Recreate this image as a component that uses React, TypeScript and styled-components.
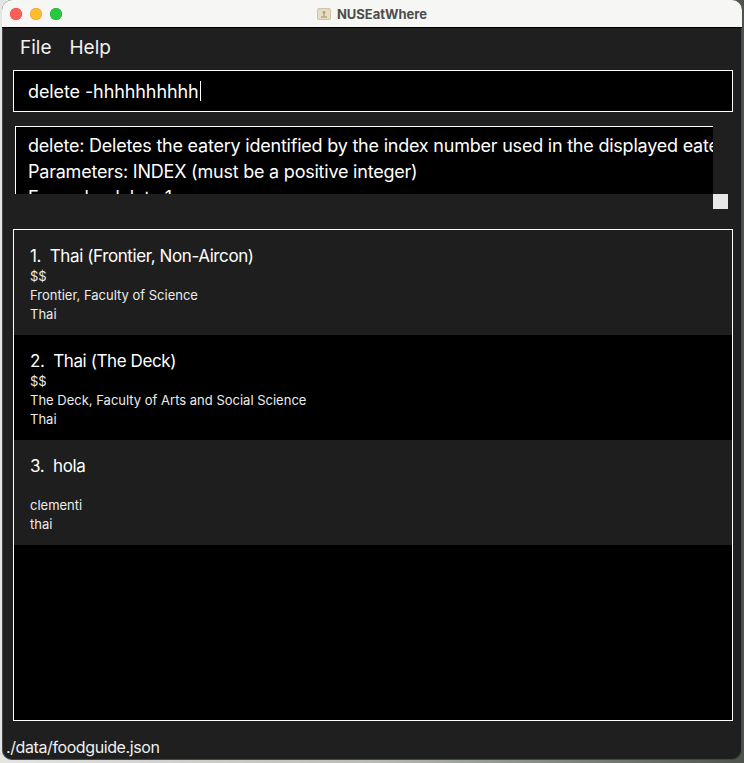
import styled, { createGlobalStyle } from 'styled-components';

const GlobalStyle = createGlobalStyle`
  html, body {
    margin: 0;
    padding: 0;
  }
  body {
    width: 744px;
    height: 763px;
    overflow: hidden;
    background: linear-gradient(90deg, #e4e4e2 0%, #b9bbb7 50%, #4d544d 100%);
    font-family: Inter, "Liberation Sans", sans-serif;
  }
`;

type Eatery = {
  name: string;
  price: string;
  location: string;
  cuisine: string;
};

const eateries: Eatery[] = [
  {
    name: 'Thai (Frontier, Non-Aircon)',
    price: '$$',
    location: 'Frontier, Faculty of Science',
    cuisine: 'Thai',
  },
  {
    name: 'Thai (The Deck)',
    price: '$$',
    location: 'The Deck, Faculty of Arts and Social Science',
    cuisine: 'Thai',
  },
  { name: 'hola', price: '', location: 'clementi', cuisine: 'thai' },
];

const App = () => {
  return (
    <>
      <GlobalStyle />
      <Window>
        <TitleBar>
          <Lights>
            <Light color="#fe5f57" edge="#e0443e" />
            <Light color="#febc2e" edge="#dea123" />
            <Light color="#28c840" edge="#1aab29" />
          </Lights>
          <Title>
            <svg width="14" height="12" viewBox="0 0 14 12">
              <rect x="0.5" y="0.5" width="13" height="11" rx="1.5" fill="#e6dcc4" stroke="#cfc3a6" />
              <circle cx="7" cy="4.2" r="1.3" fill="#a89a7c" />
              <rect x="6.4" y="5" width="1.2" height="3.5" fill="#a89a7c" />
              <rect x="4" y="8.4" width="6" height="1.2" fill="#a89a7c" />
            </svg>
            NUSEatWhere
          </Title>
        </TitleBar>
        <MenuBar>
          <MenuItem>File</MenuItem>
          <MenuItem>Help</MenuItem>
        </MenuBar>
        <CommandBox>
          delete -hhhhhhhhhh
          <Caret />
        </CommandBox>
        <ResultPane>
          <ResultView>
            <ResultText>
              <div>delete: Deletes the eatery identified by the index number used in the displayed eatery list.</div>
              <div>Parameters: INDEX (must be a positive integer)</div>
              <div>Example: delete 1</div>
            </ResultText>
          </ResultView>
          <ScrollRow>
            <ScrollCorner />
          </ScrollRow>
        </ResultPane>
        <ListPanel>
          {eateries.map((e, i) => (
            <Cell key={i} odd={i % 2 === 0}>
              <CellTitle>{`${i + 1}.  ${e.name}`}</CellTitle>
              <CellLine>{e.price}</CellLine>
              <CellLine>{e.location}</CellLine>
              <CellLine>{e.cuisine}</CellLine>
            </Cell>
          ))}
        </ListPanel>
        <StatusBar>./data/foodguide.json</StatusBar>
      </Window>
    </>
  );
};

const Window = styled.div`
  margin-left: 2px;
  width: 740px;
  height: 760px;
  border-radius: 10px;
  overflow: hidden;
  background: #1f1f1f;
  box-shadow: inset 0 0 0 1px rgba(120, 120, 120, 0.45);
  display: flex;
  flex-direction: column;
`;

const TitleBar = styled.div`
  position: relative;
  height: 27px;
  flex-shrink: 0;
  background: #f6f6f4;
  border-bottom: 1px solid #000;
  display: flex;
  align-items: center;
  justify-content: center;
`;

const Lights = styled.div`
  position: absolute;
  left: 8px;
  top: 8px;
  display: flex;
  gap: 8px;
`;

const Light = styled.span<{ color: string; edge: string }>`
  width: 12px;
  height: 12px;
  border-radius: 50%;
  background: ${(p) => p.color};
  box-shadow: inset 0 0 0 0.5px ${(p) => p.edge};
`;

const Title = styled.div`
  display: flex;
  align-items: center;
  gap: 6px;
  font-size: 13px;
  font-weight: 700;
  color: #4d4d4d;
`;

const MenuBar = styled.div`
  height: 36px;
  flex-shrink: 0;
  display: flex;
  align-items: center;
  gap: 18px;
  padding-left: 18px;
  padding-top: 2px;
  box-sizing: border-box;
`;

const MenuItem = styled.span`
  font-size: 19px;
  color: #f2f2f2;
`;

const CommandBox = styled.div`
  margin: 6px 9px 0 11px;
  height: 42px;
  flex-shrink: 0;
  box-sizing: border-box;
  border: 1px solid #fff;
  background: #000;
  color: #fff;
  font-size: 18px;
  letter-spacing: -0.1px;
  padding-left: 14px;
  display: flex;
  align-items: center;
`;

const Caret = styled.span`
  width: 1px;
  height: 20px;
  margin-left: 1px;
  background: #fff;
`;

const ResultPane = styled.div`
  margin: 14px 14px 0 13px;
  height: 83px;
  flex-shrink: 0;
  display: flex;
  flex-direction: column;
`;

const ResultView = styled.div`
  height: 68px;
  width: 698px;
  overflow: hidden;
  background: #000;
`;

const ResultText = styled.div`
  border-top: 1px solid #fff;
  border-left: 1px solid #fff;
  padding: 6px 0 0 12px;
  color: #fff;
  font-size: 18px;
  line-height: 26px;
  white-space: nowrap;
  letter-spacing: -0.22px;
`;

const ScrollRow = styled.div`
  height: 15px;
  display: flex;
  justify-content: flex-end;
`;

const ScrollCorner = styled.div`
  width: 15px;
  height: 15px;
  background: #e8e8e8;
`;

const ListPanel = styled.div`
  margin: 20px 9px 0 11px;
  height: 492px;
  flex-shrink: 0;
  box-sizing: border-box;
  border: 1px solid #fff;
  background: #000;
  display: flex;
  flex-direction: column;
`;

const Cell = styled.div<{ odd: boolean }>`
  height: 105px;
  box-sizing: border-box;
  padding: 15px 0 0 16px;
  background: ${(p) => (p.odd ? '#1e1e1e' : '#000')};
  color: #fff;
`;

const CellTitle = styled.div`
  font-size: 17px;
  line-height: 22px;
  white-space: pre;
  letter-spacing: -0.4px;
`;

const CellLine = styled.div`
  font-size: 13px;
  line-height: 19px;
  height: 19px;
  color: #ececec;
`;

const StatusBar = styled.div`
  padding: 16px 0 0 4px;
  font-size: 16px;
  color: #f0f0f0;
  letter-spacing: -0.4px;
`;

export default App;
